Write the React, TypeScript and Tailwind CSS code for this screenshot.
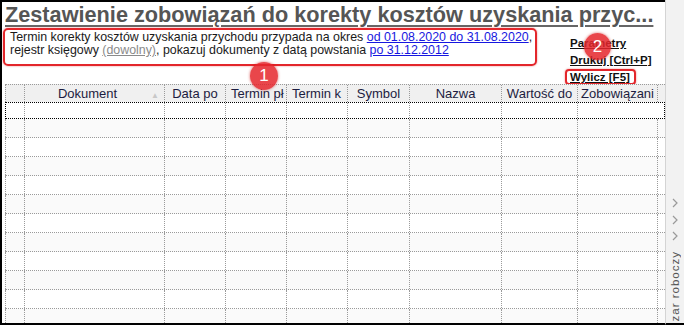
import React from "react";

const cols = [20, 140, 61, 61, 61, 62, 92, 76, 80];
const headers = ["", "Dokument", "Data po", "Termin pł", "Termin k", "Symbol", "Nazwa", "Wartość do", "Zobowiązani"];

function Chevron() {
  return (
    <svg width="8" height="10" viewBox="0 0 8 10" className="block shrink-0">
      <polyline points="2,1 6,5 2,9" fill="none" stroke="#9a9a9a" strokeWidth="1.2" />
    </svg>
  );
}

function Badge({ n, className }: { n: string; className: string }) {
  return (
    <div
      className={
        "absolute rounded-full bg-[#e5262b]/85 text-white flex items-center justify-center text-[17px] font-['Liberation_Sans',Arial,sans-serif] shadow-[0_0_3px_rgba(200,0,0,0.6)] " +
        className
      }
    >
      {n}
    </div>
  );
}

export default function App() {
  const rows = Array.from({ length: 12 });
  return (
    <div className="w-[684px] h-[325px] overflow-hidden bg-white flex relative font-['Liberation_Sans',Arial,sans-serif]">
      {/* main */}
      <div className="w-[665px] h-[325px] shrink-0 border-l-2 border-t-2 border-b-2 border-black flex flex-col overflow-hidden">
        <div className="pl-[3px] h-[26px] shrink-0">
          <span className="text-[21.7px] leading-[25px] font-bold text-[#555] whitespace-nowrap underline decoration-[2px] underline-offset-[3px] decoration-[#666]">
            Zestawienie zobowiązań do korekty kosztów uzyskania przyc...
          </span>
        </div>
        <div className="flex shrink-0 h-[56px]">
          <div className="ml-[1px] w-[534px] h-[38px] border-2 border-[#e3262b] rounded-[5px] shadow-[0_0_2px_rgba(220,0,0,0.5)] pl-[5px] pt-[1px] text-[12.4px] leading-[13px] text-[#1a1a1a] whitespace-nowrap">
            <div>
              Termin korekty kosztów uzyskania przychodu przypada na okres{" "}
              <span className="text-[#1717e0] underline">od 01.08.2020 do 31.08.2020</span>,
            </div>
            <div>
              rejestr księgowy <span className="text-[#8a8a8a] underline">(dowolny)</span>, pokazuj dokumenty z datą powstania{" "}
              <span className="text-[#1717e0] underline">po 31.12.2012</span>
            </div>
          </div>
          <div className="ml-[33px] pt-[7px] flex flex-col text-[11.5px] leading-[17px] font-bold text-[#111] whitespace-nowrap">
            <span className="underline">Parametry</span>
            <span className="underline">Drukuj [Ctrl+P]</span>
            <span className="underline -ml-[5px] pl-[3px] pr-[4px] border-2 border-[#e3262b] rounded-[4px] leading-[12px] h-[16px] w-fit shadow-[0_0_2px_rgba(220,0,0,0.5)]">
              Wylicz [F5]
            </span>
          </div>
        </div>
        {/* grid */}
        <div className="ml-[3px] flex flex-col">
          <div className="flex h-[18px] bg-[#f0f0f0] border-t border-dotted border-[#9a9a9a] text-[13px] text-[#1c1c40]">
            {cols.map((w, i) => (
              <div
                key={i}
                style={{ width: w }}
                className={
                  "relative shrink-0 h-full border-r border-dotted border-[#9a9a9a] overflow-hidden whitespace-nowrap leading-[17px] " +
                  (i === 0 ? "border-l " : "") +
                  (i === 1 ? "text-center pr-[14px]" : i === 3 || i === 4 ? "pl-[5px]" : i === 8 ? "pl-[3px]" : "text-center")
                }
              >
                {headers[i]}
                {i === 1 && (
                  <span className="absolute right-[5px] top-[2px] text-[8px] text-[#c8c8c8]">▲</span>
                )}
              </div>
            ))}
          </div>
          {rows.map((_, r) => (
            <div
              key={r}
              className={
                "flex shrink-0 " +
                (r === 0 ? "h-[17px] border border-dotted border-black" : "h-[19px] border-b border-dotted border-[#9a9a9a]") +
                (r % 2 === 1 ? " bg-[#fafafa]" : " bg-white")
              }
            >
              {cols.map((w, i) => (
                <div
                  key={i}
                  style={{ width: r === 0 && (i === 0 || i === cols.length - 1) ? w - 1 : w }}
                  className={
                    "shrink-0 h-full border-r border-dotted border-[#9a9a9a] " +
                    (i === 0 && r !== 0 ? "border-l " : "") +
                    (r === 0 && i === cols.length - 1 ? "border-r-0" : "")
                  }
                />
              ))}
            </div>
          ))}
        </div>
      </div>
      {/* sidebar */}
      <div className="flex-1 h-[325px] bg-[#f2f2f2] border-l border-[#d4d4d4] border-b-2 border-b-black flex flex-col items-center overflow-hidden">
        <div className="h-[198px] shrink-0" />
        <Chevron />
        <div className="h-[7px] shrink-0" />
        <Chevron />
        <div className="h-[6px] shrink-0" />
        <Chevron />
        <div className="h-[10px] shrink-0" />
        <div className="shrink-0 [writing-mode:vertical-rl] rotate-180 text-[11.5px] leading-[12px] tracking-[1px] text-[#555] whitespace-nowrap">
          Obszar roboczy
        </div>
      </div>
      <Badge n="1" className="left-[250px] top-[62px] w-[28px] h-[28px]" />
      <Badge n="2" className="left-[584px] top-[33px] w-[27px] h-[27px]" />
    </div>
  );
}
